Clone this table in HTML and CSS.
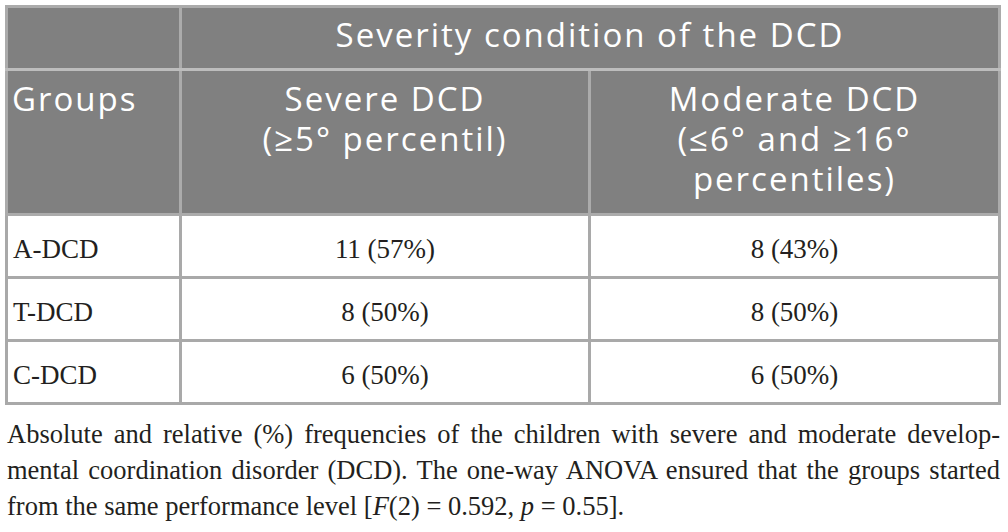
FILE: index.html
```html
<!DOCTYPE html>
<html lang="en">
<head>
<meta charset="utf-8">
<title>Severity condition of the DCD</title>
<link rel="stylesheet" href="styles.css">
</head>
<body>
<div class="wrap">
  <table class="dcd">
    <colgroup><col class="c1"><col class="c2"><col class="c3"></colgroup>
    <thead>
      <tr class="h1">
        <th class="blank"></th>
        <th class="span" colspan="2">Severity condition of the DCD</th>
      </tr>
      <tr class="h2">
        <th class="groups">Groups</th>
        <th>Severe DCD<br>(≥5° percentil)</th>
        <th>Moderate DCD<br>(≤6° and ≥16°<br>percentiles)</th>
      </tr>
    </thead>
    <tbody>
      <tr><td class="name">A-DCD</td><td>11 (57%)</td><td>8 (43%)</td></tr>
      <tr><td class="name">T-DCD</td><td>8 (50%)</td><td>8 (50%)</td></tr>
      <tr><td class="name">C-DCD</td><td>6 (50%)</td><td>6 (50%)</td></tr>
    </tbody>
  </table>
  <p class="caption">
    <span class="line just">Absolute and relative (%) frequencies of the children with severe and moderate develop-</span>
    <span class="line just">mental coordination disorder (DCD). The one-way ANOVA ensured that the groups started</span>
    <span class="line">from the same performance level [<i>F</i>(2) = 0.592, <i>p</i> = 0.55].</span>
  </p>
</div>
</body>
</html>
```
FILE: styles.css
```css
html, body {
  margin: 0;
  padding: 0;
  background: #ffffff;
}

.wrap {
  padding: 5px 0 0 5px;
  width: 996px;
}

.dcd {
  border-collapse: collapse;
  table-layout: fixed;
  width: 996px;
  border: 3px solid #a9a9a9;
}

.c1 { width: 174px; }
.c2 { width: 409px; }
.c3 { width: 410px; }

.dcd th {
  background: #808080;
  color: #ffffff;
  font-family: "Open Sans", Lato, sans-serif;
  font-weight: normal;
  font-size: 33px;
  letter-spacing: 2px;
  line-height: 40px;
  text-align: center;
  vertical-align: top;
  border: 3px solid #ababab;
  padding: 0 2px;
}

.dcd tr.h1 th {
  padding-top: 7px;
  padding-bottom: 13px;
  border-bottom-color: #bdbdbd;
}

.dcd tr.h2 th {
  padding-top: 8px;
  padding-bottom: 14px;
}

.dcd th.groups {
  text-align: left;
  padding-left: 4px;
}

.dcd td {
  font-family: "Liberation Serif", "Times New Roman", serif;
  font-size: 27px;
  line-height: 32px;
  color: #231f20;
  text-align: center;
  vertical-align: top;
  border: 3px solid #a9a9a9;
  padding: 17px 4px 11px;
}

.dcd td.name {
  text-align: left;
  padding-left: 5px;
}

.caption {
  margin: 11px 0 0;
  padding: 0 1px 0 2px;
  font-family: "Liberation Serif", "Times New Roman", serif;
  font-size: 26.5px;
  line-height: 36px;
  color: #231f20;
}

.caption .line {
  display: block;
  white-space: nowrap;
}

.caption .just {
  text-align: justify;
  text-align-last: justify;
}
```
